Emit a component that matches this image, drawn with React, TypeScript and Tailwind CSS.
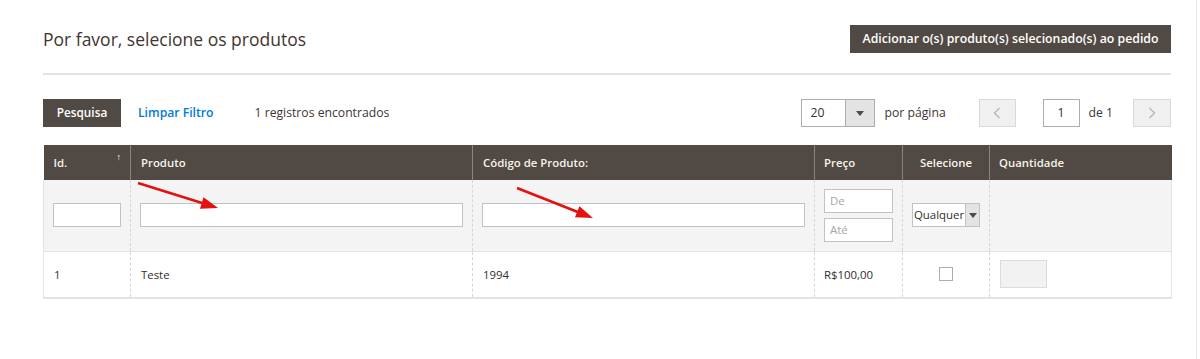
import React from "react"

const font = { fontFamily: '"Open Sans", "Liberation Sans", sans-serif' }

function Arrow({ x1, y1, x2, y2 }: { x1: number; y1: number; x2: number; y2: number }) {
  const dx = x2 - x1
  const dy = y2 - y1
  const len = Math.hypot(dx, dy)
  const ux = dx / len
  const uy = dy / len
  const bx = x2 - ux * 17
  const by = y2 - uy * 17
  const px = -uy * 6
  const py = ux * 6
  return (
    <g>
      <line x1={x1} y1={y1} x2={bx + ux * 2} y2={by + uy * 2} stroke="#e3120f" strokeWidth={2.6} />
      <polygon points={`${x2},${y2} ${bx + px},${by + py} ${bx - px},${by - py}`} fill="#e3120f" />
    </g>
  )
}

function Caret() {
  return <span className="inline-block w-0 h-0 border-l-[4px] border-r-[4px] border-t-[5px] border-l-transparent border-r-transparent border-t-[#514943]" />
}

export default function App() {
  return (
    <div className="relative w-[1197px] h-[359px] bg-white border-r border-[#e8e8e8] text-[#303030]" style={font}>
      <div className="pl-[43px] pr-[25px]">
        <div className="flex items-center justify-between pt-[25px]">
          <h1 className="text-[17.5px] text-[#41362f] leading-[28px]">Por favor, selecione os produtos</h1>
          <button className="h-[28px] w-[321px] bg-[#514943] text-white text-[12.3px] font-semibold">
            Adicionar o(s) produto(s) selecionado(s) ao pedido
          </button>
        </div>
        <div className="mt-[20px] h-[2px] bg-[#e3e3e3]" />

        <div className="mt-[24px] flex items-center h-[28px] text-[12.2px] whitespace-nowrap">
          <button className="h-[28px] w-[78px] bg-[#514943] text-white text-[11.8px] font-semibold">Pesquisa</button>
          <span className="ml-[17px] text-[#007bdb] font-semibold">Limpar Filtro</span>
          <span className="ml-[41px] text-[#41362f]">1 registros encontrados</span>
          <div className="ml-auto flex items-center">
            <div className="flex h-[28px] w-[74px] border border-[#adadad]">
              <span className="flex-1 pl-[9px] leading-[26px]">20</span>
              <span className="w-[29px] bg-[#e3e3e3] border-l border-[#adadad] flex items-center justify-center"><Caret /></span>
            </div>
            <span className="ml-[10px] w-[64px] text-[#41362f]">por página</span>
            <div className="ml-[30px] w-[37px] h-[28px] bg-[#f0f0f0] border border-[#d9d9d9] flex items-center justify-center">
              <svg width="8" height="12" viewBox="0 0 8 12"><path d="M6.5 1 L1.5 6 L6.5 11" fill="none" stroke="#b3b3b3" strokeWidth="1.2" /></svg>
            </div>
            <div className="ml-[27px] w-[37px] h-[28px] border border-[#adadad] flex items-center justify-center">1</div>
            <span className="ml-[9px] text-[#41362f]">de 1</span>
            <div className="ml-[20px] w-[38px] h-[28px] bg-[#f0f0f0] border border-[#d9d9d9] flex items-center justify-center">
              <svg width="8" height="12" viewBox="0 0 8 12"><path d="M1.5 1 L6.5 6 L1.5 11" fill="none" stroke="#b3b3b3" strokeWidth="1.2" /></svg>
            </div>
          </div>
        </div>

        <table className="mt-[18px] w-[1128px] table-fixed border-collapse text-[11.4px]">
          <colgroup>
            <col className="w-[87px]" />
            <col className="w-[342px]" />
            <col className="w-[342px]" />
            <col className="w-[88px]" />
            <col className="w-[87px]" />
            <col className="w-[182px]" />
          </colgroup>
          <thead>
            <tr className="h-[35px] bg-[#514943] text-[#f7f3eb] text-left">
              <th className="relative pl-[10px] font-semibold border-r border-[#8a837f]">
                Id.
                <span className="absolute right-[9px] top-[5px] text-[9px] font-normal">↑</span>
              </th>
              <th className="pl-[10px] font-semibold border-r border-[#8a837f]">Produto</th>
              <th className="pl-[10px] font-semibold border-r border-[#8a837f]">Código de Produto:</th>
              <th className="pl-[9px] font-semibold border-r border-[#8a837f]">Preço</th>
              <th className="text-center font-semibold border-r border-[#8a837f]">Selecione</th>
              <th className="pl-[9px] font-semibold">Quantidade</th>
            </tr>
          </thead>
          <tbody>
            <tr className="h-[71px] bg-[#f4f4f4] border-l border-r border-[#e3e3e3]">
              <td className="px-[9px] border-r border-dashed border-[#d6d6d6]">
                <div className="h-[24px] bg-white border border-[#c2c2c2]" />
              </td>
              <td className="px-[9px] border-r border-dashed border-[#d6d6d6]">
                <div className="h-[24px] bg-white border border-[#c2c2c2]" />
              </td>
              <td className="px-[9px] border-r border-dashed border-[#d6d6d6]">
                <div className="h-[24px] bg-white border border-[#c2c2c2]" />
              </td>
              <td className="px-[9px] border-r border-dashed border-[#d6d6d6]">
                <div className="flex flex-col gap-[5px] w-[69px]">
                  <div className="h-[24px] bg-white border border-[#c2c2c2] pl-[5px] leading-[22px] text-[11.5px] text-[#a6a6a6]">De</div>
                  <div className="h-[24px] bg-white border border-[#c2c2c2] pl-[5px] leading-[22px] text-[11.5px] text-[#a6a6a6]">Até</div>
                </div>
              </td>
              <td className="px-[9px] border-r border-dashed border-[#d6d6d6]">
                <div className="flex h-[24px] w-[68px] bg-white border border-[#c2c2c2] overflow-hidden">
                  <span className="w-[52px] whitespace-nowrap pl-[1px] leading-[22px] text-[11.4px] text-[#303030]">Qualquer</span>
                  <span className="flex-1 bg-[#e3e3e3] border-l border-[#c2c2c2] flex items-center justify-center"><Caret /></span>
                </div>
              </td>
              <td />
            </tr>
            <tr className="h-[47px] bg-white border border-[#e3e3e3] border-b-2">
              <td className="pl-[10px] border-r border-dashed border-[#d6d6d6]">1</td>
              <td className="pl-[10px] border-r border-dashed border-[#d6d6d6]">Teste</td>
              <td className="pl-[10px] border-r border-dashed border-[#d6d6d6]">1994</td>
              <td className="pl-[9px] border-r border-dashed border-[#d6d6d6]">R$100,00</td>
              <td className="border-r border-dashed border-[#d6d6d6]">
                <div className="mx-auto w-[14px] h-[14px] border border-[#adadad] bg-white" />
              </td>
              <td className="pl-[10px]">
                <div className="w-[47px] h-[28px] bg-[#f2f2f2] border border-[#dcdcdc]" />
              </td>
            </tr>
          </tbody>
        </table>
      </div>

      <svg className="absolute left-0 top-0 pointer-events-none" width="1200" height="359">
        <Arrow x1={138} y1={183} x2={218} y2={208} />
        <Arrow x1={517} y1={188} x2={593} y2={218} />
      </svg>
    </div>
  )
}
